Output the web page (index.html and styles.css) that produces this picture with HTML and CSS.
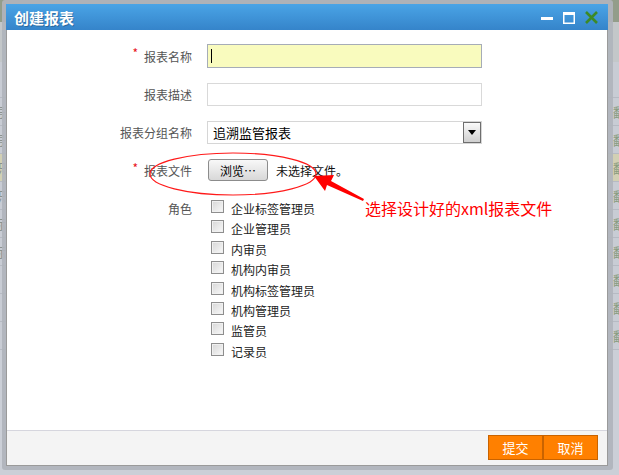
FILE: index.html
```html
<!DOCTYPE html>
<html lang="zh">
<head>
<meta charset="utf-8">
<title>创建报表</title>
<link rel="stylesheet" href="styles.css">
</head>
<body>
<div class="backdrop">
  <div class="bd-head"></div>
  <div class="bd-sub"></div>
  <div class="bd-row tall"></div>
  <div class="bd-row"><span class="l"><span>卡号</span></span><span class="r">翻译</span></div>
  <div class="bd-row"><span class="l"><span>卡号</span></span><span class="r">翻译</span></div>
  <div class="bd-row hl"><span class="l"><span>职</span></span><span class="r">翻译</span></div>
  <div class="bd-row"><span class="l"><span>职</span></span><span class="r">翻译</span></div>
  <div class="bd-row"><span class="l"><span>际</span></span><span class="r">翻译</span></div>
  <div class="bd-row"><span class="l"><span>际</span></span><span class="r">翻译</span></div>
  <div class="bd-row"><span class="l"><span></span></span><span class="r">翻译</span></div>
  <div class="bd-row"><span class="l"><span></span></span><span class="r">翻译</span></div>
  <div class="bd-row"><span class="l"><span></span></span><span class="r">翻译</span></div>
  <div class="bd-rest"></div>
</div>

<div class="frame">
  <div class="dialog">
    <div class="titlebar">
      <span class="title">创建报表</span>
      <div class="tools">
        <svg width="12" height="14" viewBox="0 0 12 14"><rect x="0" y="6" width="12" height="3" fill="#fff"/></svg>
        <svg width="12" height="12" viewBox="0 0 12 12"><rect x="0.75" y="0.75" width="10.5" height="10.5" fill="none" stroke="#fff" stroke-width="1.5"/><rect x="0" y="0" width="12" height="3" fill="#fff"/></svg>
        <svg width="13" height="13" viewBox="0 0 13 13"><path d="M1 1 L12 12 M12 1 L1 12" stroke="#3d8a26" stroke-width="2.6" fill="none"/></svg>
      </div>
    </div>
    <div class="body">
      <div class="form">
        <div class="lbl"><span class="req">*</span>报表名称</div>
        <div class="field"><div class="input focus"><span class="caret"></span></div></div>

        <div class="lbl">报表描述</div>
        <div class="field"><div class="input"></div></div>

        <div class="lbl">报表分组名称</div>
        <div class="field">
          <div class="select"><span class="sel-text">追溯监管报表</span><span class="sel-btn"><span class="tri"></span></span></div>
        </div>

        <div class="lbl"><span class="req">*</span>报表文件</div>
        <div class="field file"><span class="browse">浏览…</span><span class="nofile">未选择文件。</span></div>

        <div class="lbl top">角色</div>
        <div class="roles">
          <label class="role"><input type="checkbox"><span>企业标签管理员</span></label>
          <label class="role"><input type="checkbox"><span>企业管理员</span></label>
          <label class="role"><input type="checkbox"><span>内审员</span></label>
          <label class="role"><input type="checkbox"><span>机构内审员</span></label>
          <label class="role"><input type="checkbox"><span>机构标签管理员</span></label>
          <label class="role"><input type="checkbox"><span>机构管理员</span></label>
          <label class="role"><input type="checkbox"><span>监管员</span></label>
          <label class="role"><input type="checkbox"><span>记录员</span></label>
        </div>
      </div>
    </div>
    <div class="footer">
      <button class="btn">提交</button><button class="btn">取消</button>
    </div>
  </div>
</div>

<svg class="annot" width="619" height="475" viewBox="0 0 619 475">
  <ellipse cx="233" cy="174" rx="83" ry="21" fill="none" stroke="#ff1a1a" stroke-width="1.2"/>
  <polygon points="314,176 334,175 331,181 364,199 363,201 327,185 325,191" fill="#ff0000"/>
</svg>
<div class="note">选择设计好的xml报表文件</div>
</body>
</html>
```

FILE: styles.css
```css
html, body {
  margin: 0;
  padding: 0;
}
body {
  width: 619px;
  height: 475px;
  overflow: hidden;
  position: relative;
  font-family: "Noto Sans CJK SC", "Liberation Sans", sans-serif;
  font-size: 12px;
  background: #e6eaf2;
}

/* backdrop (page behind the dialog) */
.backdrop {
  display: flex;
  flex-direction: column;
  width: 619px;
  height: 475px;
}
.bd-head { height: 22px; background: #939d8a; flex: none; }
.bd-sub { height: 40px; background: #c3c7c9; flex: none; }
.bd-row {
  height: 27px;
  flex: none;
  background: #c8ccd4;
  border-bottom: 1px solid #b6bac3;
  display: flex;
  align-items: center;
  font-size: 13px;
  color: #8b928f;
}
.bd-row.tall { height: 35px; }
.bd-row.hl { background: #d2d0b4; }
.bd-row .l {
  width: 6px;
  overflow: hidden;
  display: flex;
  justify-content: flex-end;
  white-space: nowrap;
}
.bd-row .l span { flex: none; }
.bd-row .r {
  margin-left: auto;
  width: 6px;
  overflow: hidden;
  white-space: nowrap;
  color: #8a9c80;
}
.bd-rest { flex: 1; background: #cbcfd7; }

/* dialog frame */
.frame {
  position: absolute;
  left: 2px;
  top: 0;
  padding: 4px 5px 4px 4px;
  background: rgba(176, 180, 188, 0.92);
  border-radius: 3px;
}
.dialog {
  width: 600px;
  border: 1px solid #9a9a9a;
  border-top: none;
  background: #fff;
  display: flex;
  flex-direction: column;
}
.titlebar {
  height: 26px;
  margin: 0 -1px;
  background: linear-gradient(#4aa4e6, #3584ca);
  display: flex;
  align-items: center;
  padding: 0 10px 0 8px;
}
.title {
  color: #fff;
  font-size: 15px;
  font-weight: bold;
  text-shadow: 1px 1px 0 rgba(0, 0, 0, 0.25);
  letter-spacing: 0;
}
.tools {
  margin-left: auto;
  display: flex;
  align-items: center;
  gap: 10px;
  padding-top: 1px;
}
.tools svg { display: block; }

.body {
  height: 400px;
  box-sizing: border-box;
  padding-top: 14px;
}
.form {
  display: grid;
  grid-template-columns: 185px 275px;
  grid-template-rows: 24px 23px 23px 22px auto;
  column-gap: 15px;
  row-gap: 15px;
}
.lbl {
  display: flex;
  align-items: center;
  justify-content: flex-end;
  color: #555;
  font-size: 12px;
}
.lbl.top {
  align-items: flex-start;
  padding-top: 4px;
  line-height: 17px;
}
.req {
  color: #e8141c;
  font-size: 12px;
  margin-right: 6px;
  align-self: flex-start;
  line-height: 12px;
  padding-top: 3px;
}
.field {
  display: flex;
  align-items: stretch;
}
.input {
  width: 275px;
  box-sizing: border-box;
  border: 1px solid #d9d9d9;
  background: #fff;
  display: flex;
  align-items: center;
  padding-left: 3px;
}
.input.focus {
  border-color: #a6acb7;
  background: #f9fbbe;
}
.caret {
  width: 1px;
  height: 14px;
  background: #000;
}
.select {
  width: 275px;
  box-sizing: border-box;
  border: 1px solid #d6d6d6;
  display: flex;
  align-items: center;
  padding: 0 0 0 5px;
  font-size: 13px;
  color: #000;
}
.sel-btn {
  margin-left: auto;
  width: 18px;
  height: 21px;
  box-sizing: border-box;
  border: 1px solid #6e6e6e;
  background: linear-gradient(#fafafa, #cfcfcf);
  display: flex;
  align-items: center;
  justify-content: center;
}
.tri {
  width: 0;
  height: 0;
  border-left: 4px solid transparent;
  border-right: 4px solid transparent;
  border-top: 5px solid #000;
}
.field.file {
  align-items: center;
}
.browse {
  width: 60px;
  height: 22px;
  box-sizing: border-box;
  margin-left: 1px;
  border: 1px solid #8c8c8c;
  border-radius: 3px;
  background: linear-gradient(#f8f8f8, #d8d8d8);
  display: flex;
  align-items: center;
  justify-content: center;
  font-size: 12px;
  color: #000;
}
.nofile {
  margin-left: 8px;
  color: #111;
  font-size: 12px;
}
.roles {
  display: flex;
  flex-direction: column;
  padding: 4px 0 0 4px;
}
.role {
  height: 20.4px;
  display: flex;
  align-items: flex-start;
  color: #222;
  font-size: 12px;
}
.role input {
  appearance: none;
  -webkit-appearance: none;
  margin: 0;
  width: 13px;
  height: 13px;
  box-sizing: border-box;
  border: 1px solid #8e8e8e;
  background: linear-gradient(135deg, #d6d6d6, #f9f9f9);
  box-shadow: inset 0 0 0 1px #f0f0f0;
  flex: none;
}
.role span {
  margin-left: 7px;
  line-height: 17px;
}

.footer {
  height: 35px;
  box-sizing: border-box;
  border-top: 1px solid #d6d6de;
  background: #f4f4f4;
  display: flex;
  justify-content: flex-end;
  align-items: flex-start;
  padding: 4px 9px 0 0;
}
.btn {
  width: 55px;
  height: 25px;
  margin: 0;
  border: 1px solid #c96300;
  background: #ff8000;
  color: #fff;
  font-family: "Noto Sans CJK SC", "Liberation Sans", sans-serif;
  font-size: 13px;
  padding: 0;
}

/* annotation overlay */
.annot {
  position: absolute;
  left: 0;
  top: 0;
  pointer-events: none;
}
.note {
  position: absolute;
  left: 365px;
  top: 198px;
  font-size: 16px;
  line-height: 20px;
  color: #ff0000;
  white-space: nowrap;
}
```
